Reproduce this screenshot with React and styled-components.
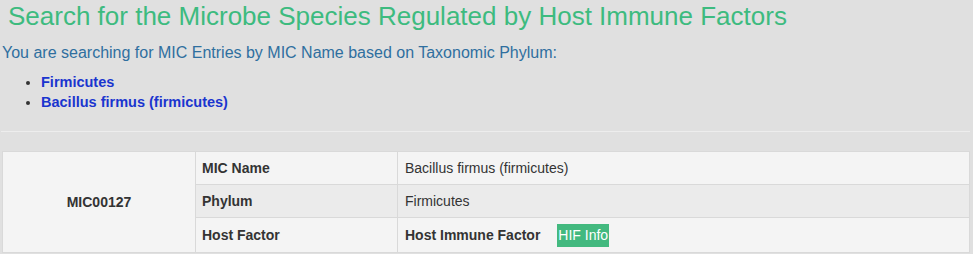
import styled, { createGlobalStyle } from "styled-components";

const GlobalStyle = createGlobalStyle`
  html, body {
    margin: 0;
    padding: 0;
    background-color: #e0e0e0;
    font-family: "Liberation Sans", Arial, sans-serif;
  }
`;

const Page = styled.div`
  padding: 0 3px 0 2px;
  background-color: #e0e0e0;
`;

const Title = styled.h2`
  margin: 0;
  padding: 1px 0 0 6px;
  font-size: 26px;
  font-weight: 400;
  line-height: 30px;
  color: #3dbb7f;
`;

const Intro = styled.p`
  margin: 12px 0 0;
  font-size: 16px;
  line-height: 20px;
  color: #2f6f9f;
`;

const PhylumList = styled.ul`
  margin: 9px 0 0;
  padding-left: 39px;
  list-style: disc;
  color: #333;
`;

const PhylumItem = styled.li`
  font-size: 14.5px;
  line-height: 20px;
  font-weight: 700;
`;

const PhylumLink = styled.span`
  color: #1a35cf;
`;

const Divider = styled.hr`
  margin: 19px 0 19px -1px;
  border: none;
  border-top: 1px solid #ededed;
  height: 0;
`;

const Table = styled.table`
  width: 968px;
  border-collapse: collapse;
  font-size: 14px;
  color: #333;
`;

const Cell = styled.td`
  border: 1px solid #d9d9d9;
  padding: 0 7px 0 ${(p) => (p.$label ? "6px" : "7px")};
  height: 32px;
  background-color: ${(p) => (p.$stripe ? "#ebebeb" : "#f4f4f4")};
  font-weight: ${(p) => (p.$bold || p.$label ? 700 : 400)};
  text-align: ${(p) => (p.$center ? "center" : "left")};
  vertical-align: middle;
`;

const Badge = styled.span`
  display: inline-block;
  margin-left: 17px;
  padding: 0 1px;
  line-height: 23px;
  background-color: #43b97f;
  color: #fff;
  font-weight: 400;
`;

const rows = [
  { label: "MIC Name", value: "Bacillus firmus (firmicutes)" },
  { label: "Phylum", value: "Firmicutes", stripe: true },
];

export default function App() {
  return (
    <>
      <GlobalStyle />
      <Page>
        <Title>Search for the Microbe Species Regulated by Host Immune Factors</Title>
        <Intro>You are searching for MIC Entries by MIC Name based on Taxonomic Phylum:</Intro>
        <PhylumList>
          <PhylumItem>
            <PhylumLink>Firmicutes</PhylumLink>
          </PhylumItem>
          <PhylumItem>
            <PhylumLink>Bacillus firmus (firmicutes)</PhylumLink>
          </PhylumItem>
        </PhylumList>
        <Divider />
        <Table>
          <colgroup>
            <col style={{ width: 193 }} />
            <col style={{ width: 202 }} />
            <col />
          </colgroup>
          <tbody>
            {rows.map((r, i) => (
              <tr key={r.label}>
                {i === 0 && (
                  <Cell rowSpan={3} $bold $center>
                    MIC00127
                  </Cell>
                )}
                <Cell $label $stripe={r.stripe}>
                  {r.label}
                </Cell>
                <Cell $stripe={r.stripe}>{r.value}</Cell>
              </tr>
            ))}
            <tr>
              <Cell $label style={{ height: 34 }}>
                Host Factor
              </Cell>
              <Cell $bold>
                Host Immune Factor
                <Badge>HIF Info</Badge>
              </Cell>
            </tr>
          </tbody>
        </Table>
      </Page>
    </>
  );
}
